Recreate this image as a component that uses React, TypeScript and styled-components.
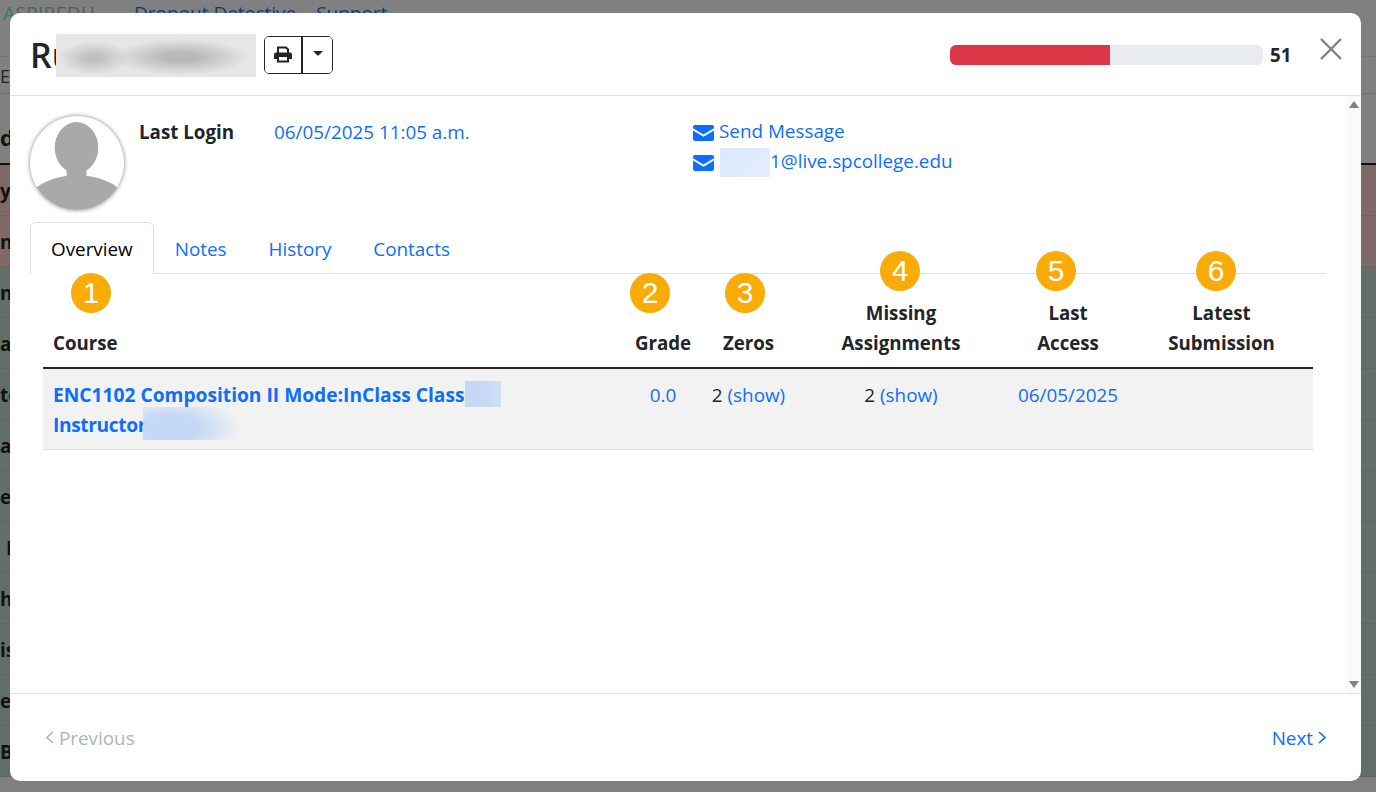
import React from 'react';
import styled, { createGlobalStyle } from 'styled-components';

const Global = createGlobalStyle`
  html, body { margin: 0; padding: 0; height: 100%; overflow: hidden; background: #808080; }
  * { box-sizing: border-box; }
  body { font-family: "Open Sans", "Noto Sans", "Liberation Sans", sans-serif; font-size: 18.85px; color: #212529; }
`;

const Page = styled.div`
  position: relative;
  width: 1376px;
  height: 792px;
  overflow: hidden;
  background: #808080;
`;

const BackNav = styled.div`
  height: 57px;
  display: flex;
  align-items: flex-start;
  gap: 20px;
  padding: 0 0 0 3px;
  border-bottom: 1px solid #777;
  font-size: 19px;
  line-height: 26px;
  color: #0a3a80;
`;

const BackLogo = styled.span`
  color: #4f5f5c;
  width: 111px;
  letter-spacing: 0.4px;
  &::first-letter { color: #2f7d72; }
`;

const BackTabs = styled.div`
  height: 37px;
  padding: 6px 0 0 0;
  font-size: 18px;
  line-height: 26px;
  color: #222;
  border-bottom: 1px solid #6e6e6e;
`;

const BackHead = styled.div`
  height: 71px;
  padding-top: 30px;
  font-size: 22px;
  line-height: 26px;
  font-weight: 700;
  color: #111;
  border-bottom: 2px solid #111;
`;

const BackRow = styled.div<{ $tone: 'red' | 'green'; $pad?: number }>`
  height: 51px;
  padding: 13px 0 0 ${(p) => p.$pad ?? 0}px;
  font-size: 19px;
  line-height: 26px;
  font-weight: 700;
  color: #111;
  background: ${(p) => (p.$tone === 'red' ? '#7f6868' : '#626f68')};
  border-bottom: 1px solid ${(p) => (p.$tone === 'red' ? '#756060' : '#5b6862')};
`;

const Modal = styled.div`
  position: absolute;
  left: 10px;
  top: 13px;
  width: 1351px;
  height: 768px;
  background: #fff;
  border-radius: 10px;
  display: flex;
  flex-direction: column;
  overflow: hidden;
`;

const Header = styled.header`
  height: 83px;
  flex: none;
  display: flex;
  align-items: center;
  padding: 0 20px;
  border-bottom: 1px solid #dee2e6;
`;

const Title = styled.h1`
  margin: 2px 0 0;
  font-size: 34px;
  line-height: 44px;
  font-weight: 600;
  width: 234px;
  position: relative;
  white-space: nowrap;
`;

const BlurName = styled.div`
  position: absolute;
  left: 26px;
  top: 1px;
  width: 200px;
  height: 43px;
  background:
    radial-gradient(ellipse 68px 18px at 125px 23px, #b9b9b9 25%, rgba(185,185,185,0) 100%),
    radial-gradient(ellipse 36px 17px at 38px 24px, #c0c0c0 20%, rgba(192,192,192,0) 100%),
    #e6e6e6;
`;

const PrintGroup = styled.div`
  display: flex;
  width: 69px;
  height: 38px;
  border: 1px solid #212529;
  border-radius: 5px;
  overflow: hidden;
  margin-top: 1px;
`;

const PrintBtn = styled.button`
  width: 38px;
  border: 0;
  border-right: 2px solid #212529;
  background: #fff;
  padding: 0;
  display: flex;
  align-items: center;
  justify-content: center;
`;

const CaretBtn = styled.button`
  flex: 1;
  border: 0;
  background: #fff;
  padding: 0;
  display: flex;
  align-items: center;
  justify-content: center;
  &::after {
    content: '';
    border-top: 5px solid #212529;
    border-left: 5px solid transparent;
    border-right: 5px solid transparent;
    margin-top: -3px;
  }
`;

const ProgressWrap = styled.div`
  margin-left: auto;
  display: flex;
  align-items: center;
  margin-right: 49px;
  margin-top: 1px;
`;

const Track = styled.div`
  width: 313px;
  height: 20px;
  border-radius: 6px;
  background: #e9ecef;
  overflow: hidden;
`;

const Fill = styled.div`
  height: 100%;
  background: #dc3545;
`;

const Score = styled.span`
  margin-left: 7px;
  font-weight: 700;
  font-size: 18.7px;
  line-height: 24px;
  width: 22px;
`;

const CloseBtn = styled.button`
  position: absolute;
  right: 19px;
  top: 25px;
  width: 22px;
  height: 22px;
  padding: 0;
  border: 0;
  background: transparent;
  display: block;
`;

const Body = styled.div`
  flex: 1;
  position: relative;
  padding: 18px 35px 0 20px;
  min-height: 0;
`;

const Scrollbar = styled.div`
  position: absolute;
  right: 0;
  top: 0;
  bottom: 0;
  width: 15px;
  background: #fafafa;
  display: flex;
  flex-direction: column;
  justify-content: space-between;
  align-items: center;
  padding: 5px 0;
`;

const Arrow = styled.span<{ $down?: boolean }>`
  width: 0;
  height: 0;
  border-left: 5px solid transparent;
  border-right: 5px solid transparent;
  ${(p) => (p.$down ? 'border-top: 7px solid #808080;' : 'border-bottom: 7px solid #808080;')}
`;

const Profile = styled.div`
  display: flex;
  height: 108px;
`;

const Avatar = styled.div`
  width: 94px;
  height: 94px;
  border-radius: 50%;
  margin-top: 2px;
  flex: none;
  background: #fff;
  box-shadow: 0 0 4px rgba(0, 0, 0, 0.5);
  overflow: hidden;
  svg { display: block; filter: blur(0.5px); }
`;

const LoginLabel = styled.strong`
  margin: 5px 0 0 15px;
  width: 135px;
  font-size: 18.75px;
  font-weight: 700;
  line-height: 26px;
  flex: none;
`;

const LoginValue = styled.a`
  margin-top: 5px;
  width: 419px;
  color: #0d6efd;
  line-height: 26px;
  flex: none;
`;

const Contact = styled.div`
  margin-top: 4px;
  display: flex;
  flex-direction: column;
  gap: 4px;
`;

const ContactLine = styled.a`
  display: flex;
  align-items: center;
  height: 26px;
  color: #0d6efd;
  white-space: nowrap;
  svg { margin: 4px 5px 0 0; flex: none; }
`;

const BlurMail = styled.span`
  display: inline-block;
  width: 50px;
  height: 29px;
  margin: 2px 0 0 1px;
  background: linear-gradient(135deg, #dbe7fd, #e5eefe);
`;

const Tabs = styled.nav`
  display: flex;
  height: 52px;
  border-bottom: 1px solid #dee2e6;
`;

const Tab = styled.a<{ $active?: boolean }>`
  height: ${(p) => (p.$active ? 52 : 51)}px;
  padding: 13px 20px 0;
  line-height: 26px;
  color: ${(p) => (p.$active ? '#000' : '#0d6efd')};
  background: #fff;
  border: 1px solid ${(p) => (p.$active ? '#dee2e6' : 'transparent')};
  border-bottom: 0;
  border-radius: 6px 6px 0 0;
`;

const Table = styled.div`
  margin: 0 13px;
`;

const Grid = styled.div`
  display: grid;
  grid-template-columns: 582px 76px 95px 210px 124px 1fr;
`;

const HeadRow = styled(Grid)`
  height: 95px;
  border-bottom: 2px solid #212529;
`;

const HeadCell = styled.div<{ $left?: boolean }>`
  position: relative;
  display: flex;
  flex-direction: column;
  justify-content: flex-end;
  font-size: 18.7px;
  font-weight: 700;
  line-height: 30px;
  padding-bottom: 9px;
  text-align: ${(p) => (p.$left ? 'left' : 'center')};
  padding-left: ${(p) => (p.$left ? 10 : 0)}px;
  white-space: nowrap;
`;

const Badge = styled.span<{ $x: number; $y: number }>`
  position: absolute;
  left: ${(p) => p.$x}px;
  top: ${(p) => p.$y}px;
  width: 40px;
  height: 40px;
  border-radius: 50%;
  background: #f9ab07;
  color: #fff;
  font-family: "Liberation Sans", Arial, sans-serif;
  font-size: 30px;
  line-height: 40px;
  text-align: center;
  font-weight: 400;
`;

const DataRow = styled(Grid)`
  height: 81px;
  background: #f2f2f2;
  border-bottom: 1px solid #dee2e6;
  line-height: 30px;
`;

const CourseCell = styled.a`
  padding: 11px 0 0 10px;
  color: #0d6efd;
  font-size: 19.2px;
  font-weight: 700;
  position: relative;
`;

const InstructorName = styled.span`
  letter-spacing: -0.4px;
`;

const BlurClass = styled.span`
  position: absolute;
  left: 422px;
  top: 12px;
  width: 36px;
  height: 26px;
  background: linear-gradient(90deg, #c5d8f5 55%, #d2e0f6);
`;

const BlurInstructor = styled.span`
  position: absolute;
  left: 100px;
  top: 38px;
  width: 100px;
  height: 33px;
  background: radial-gradient(ellipse 70px 34px at 28px 22px, #c5d8f5 40%, rgba(197,216,245,0) 100%);
`;

const Cell = styled.div`
  padding-top: 11px;
  text-align: center;
  white-space: nowrap;
`;

const Link = styled.a`
  color: #0d6efd;
`;

const Footer = styled.footer`
  height: 88px;
  flex: none;
  border-top: 1px solid #dee2e6;
  display: flex;
  justify-content: space-between;
  align-items: center;
  padding: 0 35px 0 36px;
`;

const Pager = styled.a<{ $disabled?: boolean }>`
  display: flex;
  align-items: center;
  gap: 5px;
  color: ${(p) => (p.$disabled ? '#adb5bd' : '#0d6efd')};
`;

const Mail = () => (
  <svg width="21" height="16" viewBox="0 0 21 16">
    <path fill="#0d6efd" d="M2 0h17a2 2 0 0 1 2 2v1.2l-10.5 6.3L0 3.2V2a2 2 0 0 1 2-2zM0 5.6l10.5 6.2L21 5.6V14a2 2 0 0 1-2 2H2a2 2 0 0 1-2-2z" />
  </svg>
);

const Printer = () => (
  <svg width="18" height="17" viewBox="0 0 18 17">
    <path fill="none" stroke="#212529" strokeWidth="2" d="M4 7V1.5h8L14 3.5V7" />
    <path fill="#212529" d="M2 6.5h14a2 2 0 0 1 2 2V13h-3v-2H3v2H0V8.500a2 2 0 0 1 2-2z" />
    <path fill="none" stroke="#212529" strokeWidth="2" d="M4 11v4.500h10V11" />
  </svg>
);

const Chevron = ({ right }: { right?: boolean }) => (
  <svg width="8" height="13" viewBox="0 0 8 13">
    <path fill="none" stroke="currentColor" strokeWidth="1.6" d={right ? 'M1 1l6 5.500-6 5.500' : 'M7 1L1 6.500l6 5.500'} />
  </svg>
);

const AvatarArt = () => (
  <svg width="94" height="94" viewBox="0 0 95 95">
    <ellipse cx="47" cy="32" rx="22" ry="26" fill="#a9a9a9" />
    <path fill="#a9a9a9" d="M37 50h20v12H37z" />
    <path fill="#a9a9a9" d="M7 72C18 64 32 60 47.500 60S77 64 88 72L95 95H0z" />
  </svg>
);

const backRows: Array<{ tone: 'red' | 'green'; text: string; pad?: number }> = [
  { tone: 'red', text: 'y' },
  { tone: 'red', text: 'n' },
  { tone: 'green', text: 'n' },
  { tone: 'green', text: 'as' },
  { tone: 'green', text: 'te' },
  { tone: 'green', text: 'a' },
  { tone: 'green', text: 'es' },
  { tone: 'green', text: 'I', pad: 6 },
  { tone: 'green', text: 'h' },
  { tone: 'green', text: 'is' },
  { tone: 'green', text: 'es' },
  { tone: 'green', text: 'B' },
];

export default function App() {
  return (
    <Page>
      <Global />
      <BackNav>
        <BackLogo>ASPIREDU</BackLogo>
        <span>Dropout Detective</span>
        <span>Support</span>
      </BackNav>
      <BackTabs>EN</BackTabs>
      <BackHead>d</BackHead>
      {backRows.map((r, i) => (
        <BackRow key={i} $tone={r.tone} $pad={r.pad}>{r.text}</BackRow>
      ))}
      <Modal>
        <Header>
          <Title>
            Ru
            <BlurName />
          </Title>
          <PrintGroup>
            <PrintBtn aria-label="Print"><Printer /></PrintBtn>
            <CaretBtn aria-label="More" />
          </PrintGroup>
          <ProgressWrap>
            <Track><Fill style={{ width: '51%' }} /></Track>
            <Score>51</Score>
          </ProgressWrap>
          <CloseBtn aria-label="Close">
            <svg width="22" height="22" viewBox="0 0 22 22">
              <path stroke="#808080" strokeWidth="2.400" fill="none" d="M1 1l20 20M21 1L1 21" />
            </svg>
          </CloseBtn>
        </Header>
        <Body>
          <Scrollbar><Arrow /><Arrow $down /></Scrollbar>
          <Profile>
            <Avatar><AvatarArt /></Avatar>
            <LoginLabel>Last Login</LoginLabel>
            <LoginValue>06/05/2025 11:05 a.m.</LoginValue>
            <Contact>
              <ContactLine><Mail />Send Message</ContactLine>
              <ContactLine><Mail /><BlurMail />1@live.spcollege.edu</ContactLine>
            </Contact>
          </Profile>
          <Tabs>
            <Tab $active>Overview</Tab>
            <Tab>Notes</Tab>
            <Tab>History</Tab>
            <Tab>Contacts</Tab>
          </Tabs>
          <Table>
            <HeadRow>
              <HeadCell $left>Course<Badge $x={28} $y={-1}>1</Badge></HeadCell>
              <HeadCell>Grade<Badge $x={5} $y={-1}>2</Badge></HeadCell>
              <HeadCell>Zeros<Badge $x={24} $y={-1}>3</Badge></HeadCell>
              <HeadCell>Missing<br />Assignments<Badge $x={84} $y={-23}>4</Badge></HeadCell>
              <HeadCell>Last<br />Access<Badge $x={30} $y={-23}>5</Badge></HeadCell>
              <HeadCell>Latest<br />Submission<Badge $x={66} $y={-23}>6</Badge></HeadCell>
            </HeadRow>
            <DataRow>
              <CourseCell>
                ENC1102 Composition II Mode:InClass Class<BlurClass /><br /><InstructorName>Instructor</InstructorName><BlurInstructor />
              </CourseCell>
              <Cell><Link>0.0</Link></Cell>
              <Cell>2 <Link>(show)</Link></Cell>
              <Cell>2 <Link>(show)</Link></Cell>
              <Cell><Link>06/05/2025</Link></Cell>
              <Cell />
            </DataRow>
          </Table>
        </Body>
        <Footer>
          <Pager $disabled><Chevron />Previous</Pager>
          <Pager>Next<Chevron right /></Pager>
        </Footer>
      </Modal>
    </Page>
  );
}
